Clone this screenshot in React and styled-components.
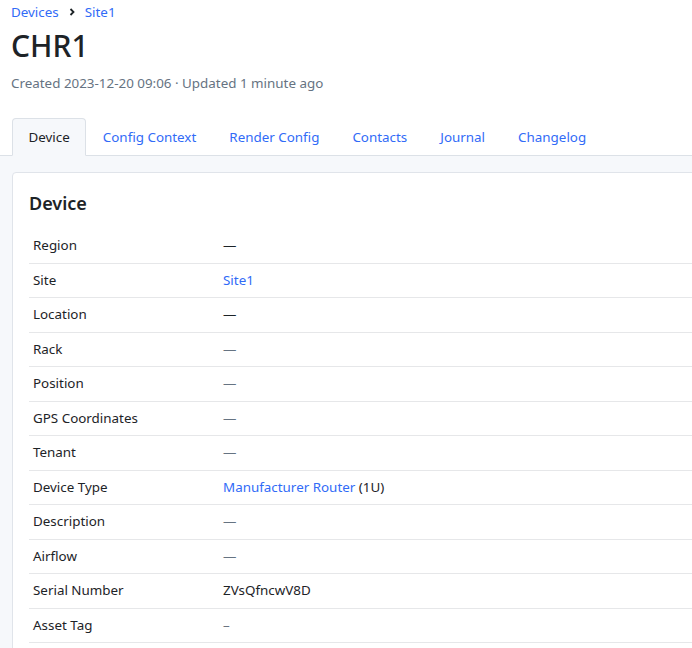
import React from 'react'
import styled, { createGlobalStyle } from 'styled-components'

const rows = [
  { label: 'Region', value: '—', kind: 'dash' },
  { label: 'Site', value: 'Site1', kind: 'link' },
  { label: 'Location', value: '—', kind: 'dash' },
  { label: 'Rack', value: '—', kind: 'muted' },
  { label: 'Position', value: '—', kind: 'muted' },
  { label: 'GPS Coordinates', value: '—', kind: 'muted' },
  { label: 'Tenant', value: '—', kind: 'muted' },
  { label: 'Device Type', value: 'Manufacturer Router', suffix: ' (1U)', kind: 'link' },
  { label: 'Description', value: '—', kind: 'muted' },
  { label: 'Airflow', value: '—', kind: 'muted' },
  { label: 'Serial Number', value: 'ZVsQfncwV8D', kind: 'text' },
  { label: 'Asset Tag', value: '–', kind: 'short' }
]

const tabs = ['Device', 'Config Context', 'Render Config', 'Contacts', 'Journal', 'Changelog']

export default () =>
  <>
    <Global />
    <Page>
      <Header>
        <Breadcrumb>
          <Link>Devices</Link>
          <Chevron viewBox="0 0 10 10">
            <path d="M3.5 2 L6.5 5 L3.5 8" fill="none" stroke="#1d2327" strokeWidth="1.8" />
          </Chevron>
          <Link>Site1</Link>
        </Breadcrumb>
        <Title>CHR1</Title>
        <Meta>Created 2023-12-20 09:06 · Updated 1 minute ago</Meta>
      </Header>
      <Tabs>
        {tabs.map((t, i) =>
          <Tab key={t} active={i === 0}>{t}</Tab>
        )}
      </Tabs>
      <Content>
        <Card>
          <CardTitle>Device</CardTitle>
          <Table>
            {rows.map(r =>
              <Row key={r.label}>
                <Label>{r.label}</Label>
                <Value kind={r.kind}>
                  {r.kind === 'link' ? <Link>{r.value}</Link> : r.value}
                  {r.suffix}
                </Value>
              </Row>
            )}
          </Table>
        </Card>
      </Content>
    </Page>
  </>

const Global = createGlobalStyle`
  body {
    margin: 0;
    background: #ffffff;
    color: #1d2327;
    font-family: "Noto Sans", "Liberation Sans", sans-serif;
    font-size: 13.4px;
    overflow: hidden;
  }
`

const Page = styled.div`
  min-width: 780px;
`

const Header = styled.div`
  padding: 2px 11px 0;
`

const Breadcrumb = styled.div`
  display: flex;
  align-items: center;
  gap: 8px;
  line-height: 20px;
`

const Chevron = styled.svg`
  width: 10px;
  height: 10px;
`

const Link = styled.span`
  color: #316bf7;
`

const Title = styled.h1`
  margin: 4px 0 0;
  font-size: 30px;
  font-weight: 500;
  line-height: 40px;
  color: #1d2327;
`

const Meta = styled.div`
  margin-top: 7px;
  color: #667382;
  line-height: 20px;
`

const Tabs = styled.div`
  display: flex;
  margin-top: 25px;
  padding-left: 12px;
  border-bottom: 1px solid #dce1e7;
`

const Tab = styled.div`
  padding: 8px 15.5px;
  line-height: 20px;
  margin-bottom: -1px;
  border: 1px solid ${props => props.active ? '#dce1e7' : 'transparent'};
  border-bottom-color: ${props => props.active ? '#f6f8fb' : 'transparent'};
  border-radius: 4px 4px 0 0;
  background: ${props => props.active ? '#f6f8fb' : 'transparent'};
  color: ${props => props.active ? '#1d2327' : '#316bf7'};
`

const Content = styled.div`
  background: #f6f8fb;
  padding: 16px 12px;
`

const Card = styled.div`
  background: #ffffff;
  border: 1px solid #e0e4ea;
  border-radius: 4px;
`

const CardTitle = styled.h2`
  margin: 0;
  padding: 16px 16px 12px;
  font-size: 18px;
  font-weight: 600;
  line-height: 28px;
`

const Table = styled.div`
  padding: 0 16px 40px;
`

const Row = styled.div`
  display: grid;
  grid-template-columns: 190px 1fr;
  border-bottom: 1px solid #e6e7e9;
  line-height: 19.5px;
`

const Label = styled.div`
  padding: 7px 4px;
`

const Value = styled.div`
  padding: 7px 4px;
  color: ${props => props.kind === 'muted' ? '#667382' : props.kind === 'short' ? '#6b7480' : '#1d2327'};
`
